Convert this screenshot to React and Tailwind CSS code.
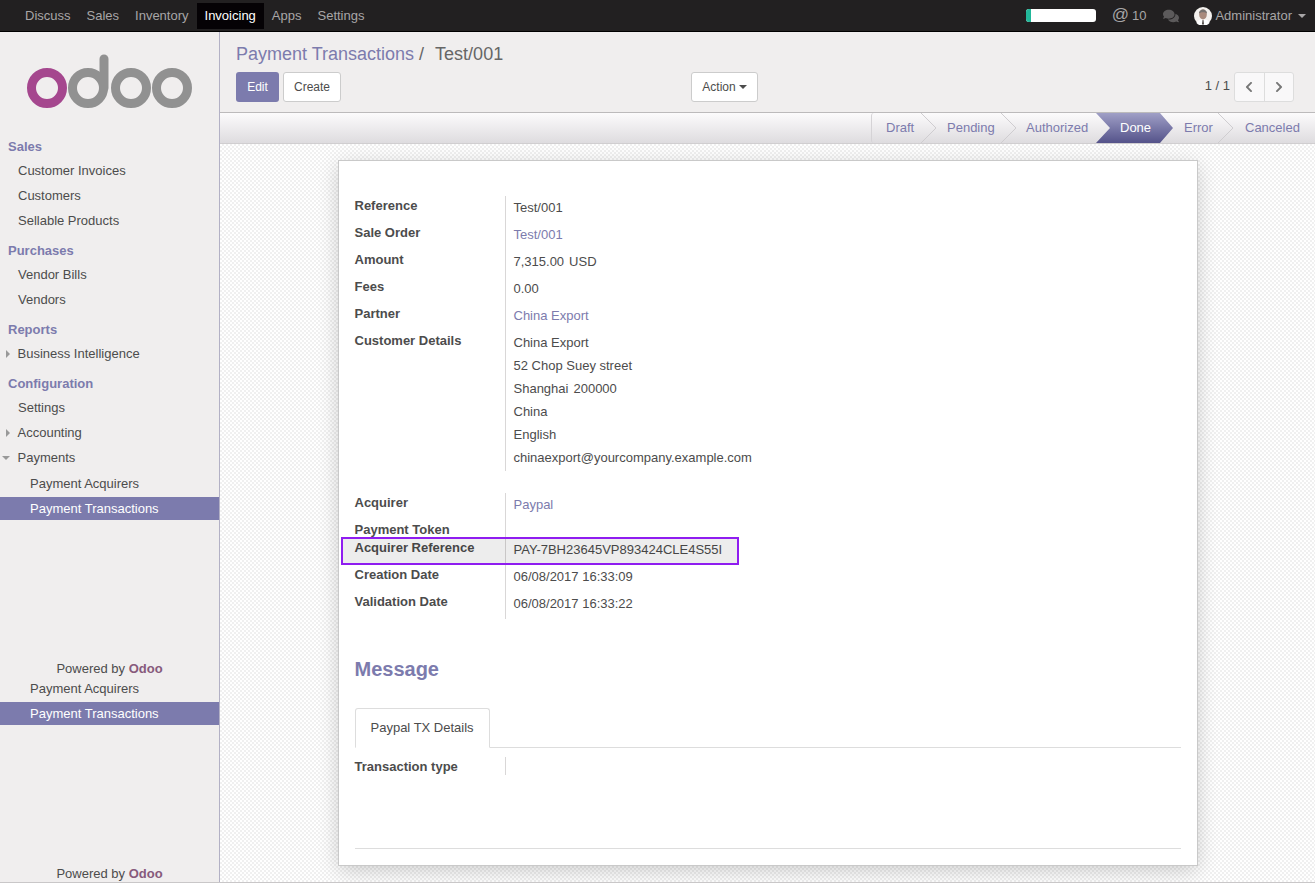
import React from 'react';
import { FaChevronLeft, FaChevronRight, FaComments } from 'react-icons/fa';

const apps = ['Discuss', 'Sales', 'Inventory', 'Invoicing', 'Apps', 'Settings'];

const Logo = () => (
  <svg viewBox="0 50 219 62" className="block w-[219px] h-[62px]" fill="none" strokeWidth="9">
    <circle cx="47" cy="88" r="15.5" stroke="#a5478e" />
    <circle cx="88" cy="88" r="15.5" stroke="#919191" />
    <path d="M104 88V59" stroke="#919191" strokeLinecap="round" />
    <circle cx="131" cy="88" r="15.5" stroke="#919191" />
    <circle cx="172" cy="88" r="15.5" stroke="#919191" />
  </svg>
);

const Avatar = () => (
  <svg viewBox="0 0 18 18" className="w-[18px] h-[18px] ml-[15px]">
    <circle cx="9" cy="9" r="9" fill="#f4f1ee" />
    <path d="M2.500 16c1-3 3.500-3.500 6.500-3.500s5.500.5 6.500 3.500a9 9 0 0 1-13 0z" fill="#fff" />
    <ellipse cx="9" cy="7.500" rx="3.800" ry="5" fill="#a98a7c" />
    <path d="M5 7C4.500 1 13.500 1 13 7c-.5-2.500-7.500-2.500-8 0z" fill="#77726f" />
    <path d="M8.500 13h1l.6 4.500H7.900z" fill="#55504e" />
  </svg>
);

const Caret = ({ className = '' }) => (
  <span className={`inline-block w-0 h-0 border-x-4 border-x-transparent border-t-4 ${className}`} />
);

const TopBar = () => (
  <div className="h-8 bg-[#222021] border-b border-black flex items-start pl-[17px] text-[#a8a6a7] text-[13px] shrink-0">
    {apps.map((a) => (
      <div key={a} className={`h-[26px] mt-[3px] px-2 flex items-center ${a === 'Invoicing' ? 'bg-[#050205] text-white' : ''}`}>
        {a}
      </div>
    ))}
    <div className="ml-auto flex items-center h-[31px] pr-[9px]">
      <div className="w-[70px] h-[13px] rounded-[3px] bg-white overflow-hidden mr-4">
        <div className="w-[5px] h-full bg-[#21b799]" />
      </div>
      <span className="text-[17px] leading-none relative -top-px">@</span>
      <span className="ml-[3px]">10</span>
      <FaComments className="ml-[17px] text-[16px] text-[#5c5a5b]" />
      <Avatar />
      <span className="ml-[3px]">Administrator</span>
      <Caret className="ml-[6px] border-t-[#a8a6a7]" />
    </div>
  </div>
);

const Heading = ({ children }) => (
  <div className="mt-[9px] mb-[2px] h-[18px] leading-[18px] pl-2 font-bold text-[#7c7bad]">{children}</div>
);

const Item = ({ children, arrow }) => (
  <div className={`h-[25px] flex items-center relative text-[#4c4c4c] ${arrow ? 'pl-[17.5px]' : 'pl-[18px]'}`}>
    {arrow === 'right' && (
      <span className="absolute left-[6px] w-0 h-0 border-y-4 border-y-transparent border-l-4 border-l-[#999]" />
    )}
    {arrow === 'down' && (
      <span className="absolute left-[2px] w-0 h-0 border-x-4 border-x-transparent border-t-4 border-t-[#999]" />
    )}
    {children}
  </div>
);

const PaymentLinks = () => (
  <>
    <div className="h-[25px] flex items-center pl-[30px] text-[#4c4c4c]">Payment Acquirers</div>
    <div className="h-[23px] mt-px flex items-center pl-[30px] bg-[#7c7bad] text-white">Payment Transactions</div>
  </>
);

const Powered = ({ className = '' }) => (
  <div className={`h-[18px] leading-[18px] text-center text-[#4c4c4c] ${className}`}>
    Powered by <span className="font-bold text-[#875a7b]">Odoo</span>
  </div>
);

const Sidebar = () => (
  <div className="w-[220px] shrink-0 bg-[#f0eeee] border-r border-[#b3b1c5] pt-[18px] overflow-hidden">
    <Logo />
    <div className="mt-[26px]">
      <Heading>Sales</Heading>
      <Item>Customer Invoices</Item>
      <Item>Customers</Item>
      <Item>Sellable Products</Item>
      <Heading>Purchases</Heading>
      <Item>Vendor Bills</Item>
      <Item>Vendors</Item>
      <Heading>Reports</Heading>
      <Item arrow="right">Business Intelligence</Item>
      <Heading>Configuration</Heading>
      <Item>Settings</Item>
      <Item arrow="right">Accounting</Item>
      <Item arrow="down">Payments</Item>
      <div className="mt-px">
        <PaymentLinks />
      </div>
      <Powered className="mt-[140px]" />
      <div className="-mt-[2px]">
        <PaymentLinks />
      </div>
      <Powered className="mt-[140px]" />
    </div>
  </div>
);

const ControlPanel = () => (
  <div className="h-[81px] bg-[#f0eeee] border-b border-[#bcbabb] pl-4 pr-[21px] shrink-0 text-xs">
    <div className="h-10 flex items-center text-lg pt-[4px]">
      <span className="text-[#7c7bad]">Payment Transactions</span>
      <span className="text-[#666] ml-[5px]">/</span>
      <span className="text-[#666] ml-[11px]">Test/001</span>
    </div>
    <div className="flex items-center">
      <div className="w-[455px] flex gap-1">
        <button className="h-[30px] w-[43px] rounded-[3px] bg-[#7c7bad] text-white">Edit</button>
        <button className="h-[30px] w-[58px] rounded-[3px] bg-white border border-[#ccc] text-[#4c4c4c]">Create</button>
      </div>
      <button className="h-[30px] w-[67px] rounded-[3px] bg-white border border-[#ccc] text-[#4c4c4c] flex items-center justify-center gap-[3px]">
        Action
        <Caret className="border-t-[#4c4c4c]" />
      </button>
      <div className="ml-auto flex items-center text-[13px] text-[#4c4c4c]">
        <span className="mr-1 relative -top-px">1 / 1</span>
        <div className="h-[30px] w-[60px] flex rounded-[3px] bg-[#f9f8f9] border border-[#ddd] text-[#777]">
          <div className="flex-1 flex items-center justify-center border-r border-[#ddd]">
            <FaChevronLeft className="text-[12px]" />
          </div>
          <div className="flex-1 flex items-center justify-center">
            <FaChevronRight className="text-[12px]" />
          </div>
        </div>
      </div>
    </div>
  </div>
);

const Chevron = () => (
  <svg viewBox="0 0 15 30" className="absolute top-0 -right-[15px] w-[15px] h-[30px] z-10" fill="none" stroke="#cfcdd0">
    <path d="M0 0l15 15L0 30" />
  </svg>
);

const StatusBar = () => (
  <div className="h-[31px] shrink-0 border-b border-[#d0ced0] bg-gradient-to-b from-[#fcfbfc] to-[#dedcdf] flex justify-end text-[13px] text-[#7c7bad]">
    <div className="w-[50px] pl-[14px] border-l border-[#d5d3d6] rounded-l-[3px] h-[30px] leading-[30px] relative">
      Draft
      <Chevron />
    </div>
    <div className="w-20 pl-[26px] h-[30px] leading-[30px] relative">
      Pending
      <Chevron />
    </div>
    <div className="w-[95px] pl-[25px] h-[30px] leading-[30px]">Authorized</div>
    <div className="w-[77px] -mr-[13px] pl-6 h-[30px] leading-[30px] text-white bg-gradient-to-b from-[#a09fc6] to-[#55538a] [clip-path:polygon(0_0,64px_0,77px_50%,64px_100%,0_100%,14px_50%)] relative z-10">
      Done
    </div>
    <div className="w-[58px] pl-6 h-[30px] leading-[30px] relative">
      Error
      <Chevron />
    </div>
    <div className="w-[97px] pl-[27px] h-[30px] leading-[30px]">Canceled</div>
  </div>
);

const Row = ({ label, children, className = '' }) => (
  <div className={`flex ${className}`}>
    <div className="w-[151px] shrink-0 border-r border-[#d9d7d7] pt-px font-bold leading-[18px]">{label}</div>
    <div className="pl-2 pt-[3px] leading-[18px]">{children}</div>
  </div>
);

const Link = ({ children }) => <span className="text-[#7c7bad]">{children}</span>;

const addressLines = [
  'China Export',
  '52 Chop Suey street',
  <>Shanghai<span className="ml-[5px]">200000</span></>,
  'China',
  'English',
  'chinaexport@yourcompany.example.com',
];

const Sheet = () => (
  <div className="w-[860px] h-[706px] ml-[118px] mt-4 bg-white border border-[#c9c9c9] shadow-[0_5px_20px_-1px_rgba(0,0,0,0.2)] pl-[15.5px] pr-4 pt-[35px] text-[13px] text-[#4c4c4c]">
    <Row label="Reference" className="h-[27px]">Test/001</Row>
    <Row label="Sale Order" className="h-[27px]"><Link>Test/001</Link></Row>
    <Row label="Amount" className="h-[27px]">7,315.00<span className="ml-[5px]">USD</span></Row>
    <Row label="Fees" className="h-[27px]">0.00</Row>
    <Row label="Partner" className="h-[27px]"><Link>China Export</Link></Row>
    <Row label="Customer Details" className="h-[140px]">
      {addressLines.map((l, i) => (
        <div key={i} className="h-[23px] leading-[18px]">{l}</div>
      ))}
    </Row>
    <div className="h-[22px]" />
    <Row label="Acquirer" className="h-[27px]"><Link>Paypal</Link></Row>
    <Row label="Payment Token" className="h-[18px]" />
    <div className="relative">
      <Row label="Acquirer Reference" className="h-[27px]">PAY-7BH23645VP893424CLE4S55I</Row>
      <div className="absolute -left-[14px] -top-[1px] w-[398px] h-[28px] border-2 border-[#8f1df0] bg-black/[0.07]" />
    </div>
    <Row label="Creation Date" className="h-[27px]">06/08/2017 16:33:09</Row>
    <Row label="Validation Date" className="h-[27px]">06/08/2017 16:33:22</Row>
    <h2 className="mt-9 h-7 leading-7 text-xl font-bold text-[#7c7bad]">Message</h2>
    <div className="mt-[25px] h-10 border-b border-[#ddd] flex">
      <div className="w-[135px] h-10 bg-white border border-[#ddd] border-b-white rounded-t-[3px] pl-[15px] leading-[37px]">
        Paypal TX Details
      </div>
    </div>
    <Row label="Transaction type" className="mt-[9px] h-[18px]" />
    <div className="mt-[73px] border-t border-[#ddd]" />
  </div>
);

const App = () => (
  <div className="h-[883px] w-[1315px] overflow-hidden flex flex-col font-['Liberation_Sans',Arial,sans-serif] text-[13px]">
    <TopBar />
    <div className="flex-1 flex min-h-0 border-b border-[#c9c7c8]">
      <Sidebar />
      <div className="flex-1 flex flex-col min-w-0">
        <ControlPanel />
        <StatusBar />
        <div className="flex-1 overflow-hidden bg-[repeating-conic-gradient(#f0f0f0_0_25%,#ffffff_0_50%)] bg-[length:4px_4px]">
          <Sheet />
        </div>
      </div>
    </div>
  </div>
);

export default App;
